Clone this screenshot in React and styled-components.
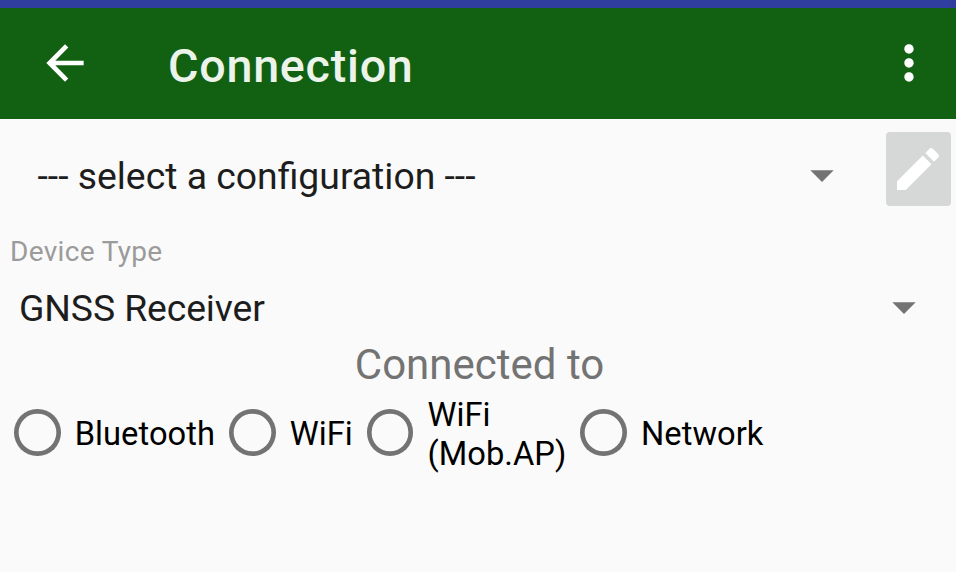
import { useState } from 'react';
import styled, { createGlobalStyle } from 'styled-components';

const GlobalStyle = createGlobalStyle`
  * {
    box-sizing: border-box;
  }

  body {
    margin: 0;
    background-color: #fafafa;
    font-family: Roboto, sans-serif;
  }
`;

const Screen = styled.div`
  height: 572px;
  display: flex;
  flex-direction: column;
  background-color: #fafafa;
  overflow: hidden;
`;

const StatusBar = styled.div`
  height: 8px;
  flex: none;
  background-color: #303f9f;
`;

const Toolbar = styled.header`
  height: 111px;
  flex: none;
  display: flex;
  align-items: center;
  padding: 0 19.3px 1px 37.4px;
  background-color: #126112;
`;

const IconButton = styled.button`
  display: flex;
  padding: 0;
  border: none;
  background: none;
  color: #fff;
  cursor: pointer;
`;

const Icon = styled.svg`
  width: 56px;
  height: 56px;
  fill: currentColor;
`;

const Title = styled.h1`
  flex: 1;
  margin: 0;
  padding: 6px 0 0 74.6px;
  font-size: 46.67px;
  font-weight: 500;
  letter-spacing: 0.75px;
  color: #ebf3eb;
`;

const ConfigRow = styled.div`
  height: 100px;
  flex: none;
  display: flex;
  align-items: center;
  padding: 0 5px 0 37.5px;
`;

const Spinner = styled.div`
  flex: 1;
  display: flex;
  align-items: center;
  justify-content: space-between;
  padding-top: ${(props) => props.$offset || 0}px;
  font-size: 37.33px;
  line-height: 44px;
  color: #1d1d1d;
  white-space: nowrap;
  cursor: pointer;
`;

const SpinnerText = styled.span`
  padding-top: 2px;
  letter-spacing: ${(props) => props.$spacing || 0}px;
`;

const Caret = styled(Icon)`
  color: #737373;
`;

const EditButton = styled(IconButton)`
  width: 65px;
  height: 74px;
  margin-left: 36.5px;
  padding-right: 1px;
  align-items: center;
  justify-content: center;
  border-radius: 4px;
  background-color: #d6d7d7;
`;

const Label = styled.div`
  padding: 16px 0 0 10px;
  font-size: 28px;
  line-height: 33px;
  letter-spacing: 0.33px;
  color: #9b9b9b;
`;

const DeviceRow = styled.div`
  height: 72px;
  flex: none;
  display: flex;
  padding: 5px 24px 0 19px;
`;

const SectionTitle = styled.div`
  padding-left: 3px;
  font-size: 42px;
  line-height: 49px;
  text-align: center;
  color: #737373;
`;

const RadioGroup = styled.div`
  height: 87px;
  display: flex;
  align-items: center;
`;

const RadioLabel = styled.label`
  display: flex;
  align-items: center;
  padding-left: 14px;
  font-size: 32.67px;
  line-height: 38.4px;
  letter-spacing: 0.05px;
  color: #000;
  white-space: pre-line;
  cursor: pointer;
`;

const RadioText = styled.span`
  padding-top: 4px;
`;

const RadioInput = styled.input`
  appearance: none;
  flex: none;
  width: 46.67px;
  height: 46.67px;
  margin: 0 14px 0 0;
  border-radius: 50%;
  box-shadow: inset 0 0 0 4.67px #737373;

  &:checked {
    background: radial-gradient(#126112 35%, transparent 37%);
    box-shadow: inset 0 0 0 4.67px #126112;
  }
`;

const connections = [
  { value: 'bluetooth', text: 'Bluetooth' },
  { value: 'wifi', text: 'WiFi' },
  { value: 'wifi-ap', text: 'WiFi\n(Mob.AP)' },
  { value: 'network', text: 'Network' },
];

function DropDownIcon() {
  return (
    <Caret viewBox="0 0 24 24">
      <path d="M7 10l5 5 5-5z" />
    </Caret>
  );
}

function App() {
  const [connection, setConnection] = useState('');

  return (
    <Screen>
      <GlobalStyle />
      <StatusBar />
      <Toolbar>
        <IconButton aria-label="Back">
          <Icon viewBox="0 0 24 24">
            <path d="M20 11H7.83l5.59-5.59L12 4l-8 8 8 8 1.41-1.41L7.83 13H20v-2z" />
          </Icon>
        </IconButton>
        <Title>Connection</Title>
        <IconButton aria-label="More options">
          <Icon viewBox="0 0 24 24">
            <path d="M12 8c1.1 0 2-.9 2-2s-.9-2-2-2-2 .9-2 2 .9 2 2 2zm0 2c-1.1 0-2 .9-2 2s.9 2 2 2 2-.9 2-2-.9-2-2-2zm0 6c-1.1 0-2 .9-2 2s.9 2 2 2 2-.9 2-2-.9-2-2-2z" />
          </Icon>
        </IconButton>
      </Toolbar>
      <ConfigRow>
        <Spinner $offset={11}>
          <SpinnerText>--- select a configuration ---</SpinnerText>
          <DropDownIcon />
        </Spinner>
        <EditButton aria-label="Edit configuration">
          <Icon viewBox="0 0 24 24">
            <path d="M3 17.25V21h3.75L17.81 9.94l-3.75-3.75L3 17.25zM20.71 7.04c.39-.39.39-1.02 0-1.41l-2.34-2.34c-.39-.39-1.02-.39-1.41 0l-1.83 1.83 3.75 3.75 1.83-1.83z" />
          </Icon>
        </EditButton>
      </ConfigRow>
      <Label>Device Type</Label>
      <DeviceRow>
        <Spinner>
          <SpinnerText $spacing={-0.1}>GNSS Receiver</SpinnerText>
          <DropDownIcon />
        </Spinner>
      </DeviceRow>
      <SectionTitle>Connected to</SectionTitle>
      <RadioGroup>
        {connections.map(({ value, text }) => (
          <RadioLabel key={value}>
            <RadioInput
              type="radio"
              name="connection"
              checked={connection === value}
              onChange={() => setConnection(value)}
            />
            <RadioText>{text}</RadioText>
          </RadioLabel>
        ))}
      </RadioGroup>
    </Screen>
  );
}

export default App;
